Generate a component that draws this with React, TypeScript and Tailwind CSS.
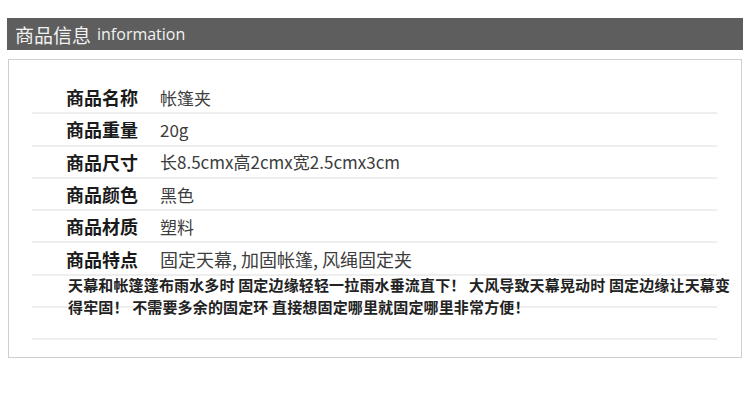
const FONT = '"Noto Sans CJK SC", "Noto Sans", sans-serif'

const ROWS = [
  { label: '商品名称', value: '帐篷夹' },
  { label: '商品重量', value: '20g' },
  { label: '商品尺寸', value: '长8.5cmx高2cmx宽2.5cmx3cm' },
  { label: '商品颜色', value: '黑色' },
  { label: '商品材质', value: '塑料' },
  { label: '商品特点', value: '固定天幕, 加固帐篷, 风绳固定夹', big: true },
  { label: '', value: '' },
  { label: '', value: '' },
]

export default function App() {
  return (
    <div className="w-[750px] h-[400px] bg-white pt-[18px] px-[7px]" style={{ fontFamily: FONT }}>
      <div className="h-[32px] bg-[#5e5e5e] flex items-center pl-[8px] text-[#f2f2f2]">
        <span className="text-[19px] leading-none">商品信息</span>
        <span className="ml-[6px] text-[16px] leading-none font-['Open_Sans',sans-serif]">information</span>
      </div>
      <div className="mt-[9px] ml-[1px] mr-[1px] h-[299px] border border-[#cfcfcf] pt-[22px] pl-[23px] pr-[24px]">
        <div className="relative">
          {ROWS.map((r, i) => (
            <div key={i} className="h-[32.3px] border-b-2 border-[#eeeeee] flex items-center pl-[34px]">
              <span className="w-[94px] text-[18px] font-bold text-[#1a1a1a] leading-none">{r.label}</span>
              <span className={r.big ? 'text-[18px] text-[#3c3c3c] leading-none' : 'text-[17px] text-[#3c3c3c] leading-none'}>
                {r.value}
              </span>
            </div>
          ))}
          <p className="absolute left-[36px] top-[192px] whitespace-nowrap text-[15px] tracking-[0.15px] leading-[22px] font-bold text-[#222]">
            天幕和帐篷篷布雨水多时 固定边缘轻轻一拉雨水垂流直下！ 大风导致天幕晃动时 固定边缘让天幕变
            <br />
            得牢固！ 不需要多余的固定环 直接想固定哪里就固定哪里非常方便！
          </p>
        </div>
      </div>
    </div>
  )
}
